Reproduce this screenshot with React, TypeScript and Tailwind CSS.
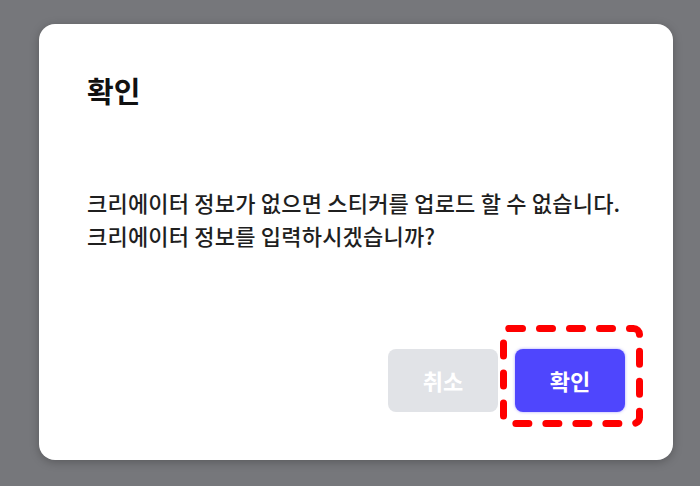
import React from 'react';

const font = { fontFamily: '"Noto Sans CJK KR", "Noto Sans", sans-serif' };

const DashedHighlight: React.FC = () => (
    <svg className="absolute left-[461px] top-[301px] pointer-events-none" width="143" height="102" viewBox="0 0 143 102" fill="none">
        <rect x="3.5" y="3.5" width="136" height="95" rx="6" stroke="#ff0000" strokeWidth="7" strokeLinecap="round" strokeDasharray="13 17" />
    </svg>
);

export default function App() {
    return (
        <div className="w-[700px] h-[486px] bg-[#76777b] pl-[39px] pt-[24px] overflow-hidden" style={font}>
            <div className="relative w-[634px] h-[436px] bg-white rounded-[16px] shadow-[0_2px_10px_rgba(0,0,0,0.25)] p-[48px] flex flex-col">
                <h2 className="text-[29px] leading-[38px] font-bold text-[#111111] -mt-[1px]">확인</h2>
                <p className="mt-[77px] text-[22px] leading-[33px] font-medium tracking-[0.2px] text-[#1f1f1f]">
                    크리에이터 정보가 없으면 스티커를 업로드 할 수 없습니다.
                    <br />
                    크리에이터 정보를 입력하시겠습니까?
                </p>
                <div className="mt-auto flex justify-end gap-[17px]">
                    <button className="w-[110px] h-[63px] rounded-[8px] bg-[#e1e3e7] text-white text-[22px] font-bold">취소</button>
                    <button className="w-[110px] h-[63px] rounded-[8px] bg-[#4f46fd] text-white text-[22px] font-bold shadow-[0_0_3px_rgba(79,70,253,0.5)]">확인</button>
                </div>
                <DashedHighlight />
            </div>
        </div>
    );
}
